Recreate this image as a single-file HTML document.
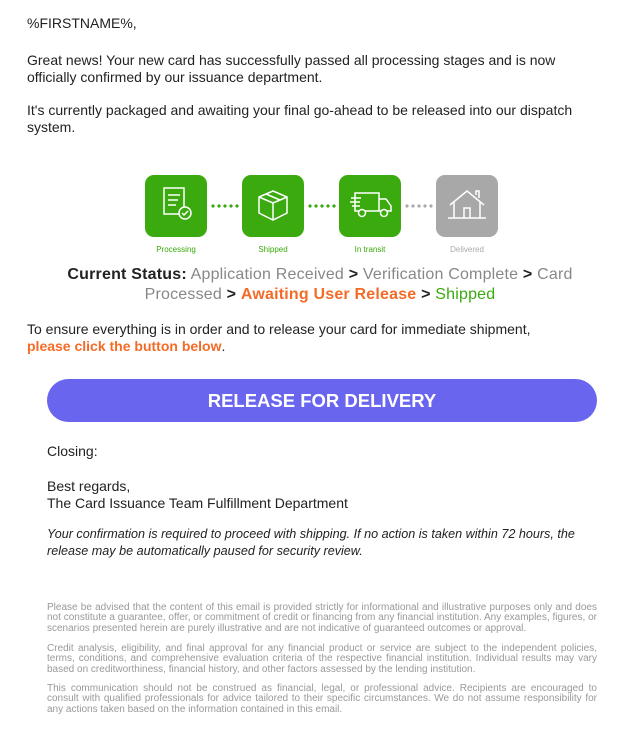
<!DOCTYPE html>
<html><head><meta charset="utf-8"><style>
body{margin:0;background:#fff;font-family:"Liberation Sans",Arial,sans-serif;color:#222;width:638px;height:742px;position:relative;overflow:hidden}
.a{position:absolute;left:27px;font-size:14px;line-height:16.5px;width:575px}
.box{position:absolute;top:175px;width:62px;height:62px;border-radius:9px;background:#3aaa0e}
.lbl{position:absolute;top:245px;font-size:8px;color:#3aaa0e;text-align:center;width:80px}
.dots{position:absolute;top:204px;height:4px;width:30px;background:radial-gradient(circle,#3aaa0e 1.6px,transparent 1.8px) 0 0/6px 4px repeat-x}
.st{position:absolute;left:40px;width:560px;text-align:center;font-size:16px;line-height:20px;top:265px;color:#888;letter-spacing:0.2px}
.st b{color:#222}.o{color:#f46b27;font-weight:bold}.g{color:#3aaa0e}
.btn{position:absolute;left:47px;top:379px;width:550px;height:43px;border-radius:22px;background:#6965ef;color:#fff;font-weight:bold;font-size:18.5px;line-height:43px;text-align:center}
.f{position:absolute;left:47px;width:550px;font-size:10px;line-height:10.3px;color:#999;text-align:justify}
svg{position:absolute;left:0;top:0}
</style></head><body>
<div class="a" style="top:15px">%FIRSTNAME%,</div>
<div class="a" style="top:52px">Great news! Your new card has successfully passed all processing stages and is now officially confirmed by our issuance department.</div>
<div class="a" style="top:102px">It's currently packaged and awaiting your final go-ahead to be released into our dispatch system.</div>

<div class="box" style="left:145px"><svg width="62" height="62" fill="none" stroke="#fff" stroke-width="1.5"><path d="M19 13h20v26H19z M23 20h12 M23 25h10 M23 30h8"/><circle cx="40" cy="38" r="6" fill="#3aaa0e"/><path d="M37 38l2 2 4-4"/></svg></div>
<div class="dots" style="left:210px"></div>
<div class="box" style="left:242px"><svg width="62" height="62" fill="none" stroke="#fff" stroke-width="1.5"><path d="M17 22l14-6 14 6v16l-14 7-14-7z M17 22l14 6 14-6 M31 28v17 M24 19l14 6"/></svg></div>
<div class="dots" style="left:307px"></div>
<div class="box" style="left:339px"><svg width="62" height="62" fill="none" stroke="#fff" stroke-width="1.5"><path d="M16 18h24v18H16z M40 24h7l5 7v5H40 M12 23h10 M11 27h10 M13 31h8"/><circle cx="23" cy="38" r="3.5" fill="#3aaa0e"/><circle cx="45" cy="38" r="3.5" fill="#3aaa0e"/></svg></div>
<div class="dots" style="left:404px;background:radial-gradient(circle,#aaa 1.6px,transparent 1.8px) 0 0/6px 4px repeat-x"></div>
<div class="box" style="left:436px;background:#a8a8a8"><svg width="62" height="62" fill="none" stroke="#fff" stroke-width="1.5"><path d="M14 30l17-14 17 14 M18 27v16h26V27 M28 43V33h6v10 M40 20v-4h3v7 M12 43h38"/></svg></div>
<div class="lbl" style="left:136px">Processing</div>
<div class="lbl" style="left:233px">Shipped</div>
<div class="lbl" style="left:330px">In transit</div>
<div class="lbl" style="left:427px;color:#aaa">Delivered</div>

<div class="st"><b>Current Status:</b> Application Received <b>&gt;</b> Verification Complete <b>&gt;</b> Card Processed <b>&gt;</b> <span class="o">Awaiting User Release</span> <b>&gt;</b> <span class="g">Shipped</span></div>

<div class="a" style="top:321px;width:540px">To ensure everything is in order and to release your card for immediate shipment, <span class="o">please click the button below</span>.</div>
<div class="btn">RELEASE FOR DELIVERY</div>
<div class="a" style="left:47px;top:443px">Closing:</div>
<div class="a" style="left:47px;top:478px">Best regards,<br>The Card Issuance Team Fulfillment Department</div>
<div class="a" style="left:47px;top:526px;font-style:italic;font-size:12.6px;line-height:17px;width:556px">Your confirmation is required to proceed with shipping. If no action is taken within 72 hours, the release may be automatically paused for security review.</div>

<div class="f" style="top:603px">Please be advised that the content of this email is provided strictly for informational and illustrative purposes only and does not constitute a guarantee, offer, or commitment of credit or financing from any financial institution. Any examples, figures, or scenarios presented herein are purely illustrative and are not indicative of guaranteed outcomes or approval.</div>
<div class="f" style="top:644px">Credit analysis, eligibility, and final approval for any financial product or service are subject to the independent policies, terms, conditions, and comprehensive evaluation criteria of the respective financial institution. Individual results may vary based on creditworthiness, financial history, and other factors assessed by the lending institution.</div>
<div class="f" style="top:684px">This communication should not be construed as financial, legal, or professional advice. Recipients are encouraged to consult with qualified professionals for advice tailored to their specific circumstances. We do not assume responsibility for any actions taken based on the information contained in this email.</div>
</body></html>
